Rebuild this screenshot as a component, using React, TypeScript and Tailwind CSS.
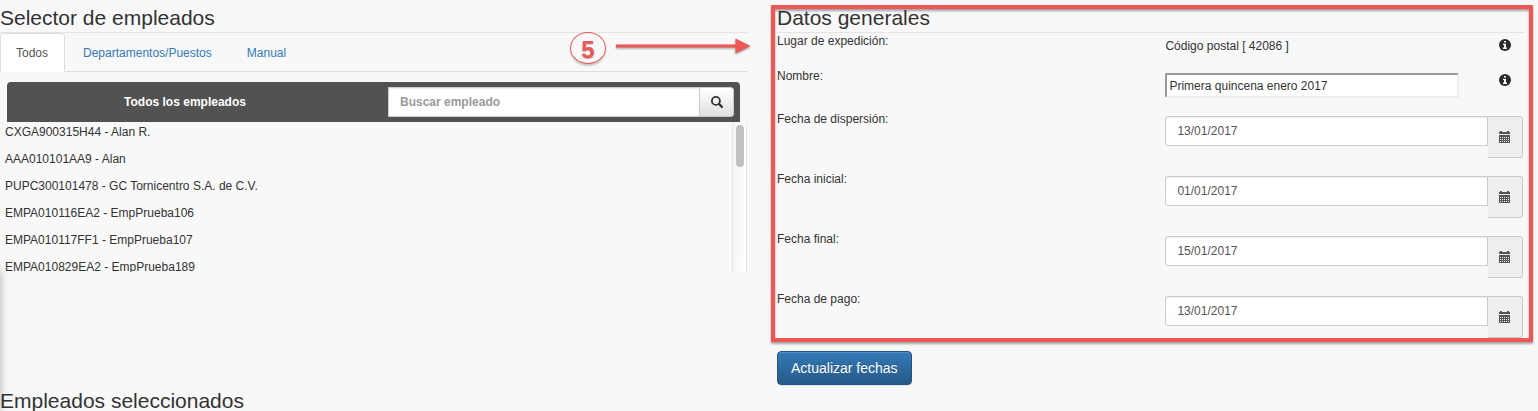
import { useState } from "react";

const tabs = ["Todos", "Departamentos/Puestos", "Manual"];

const employees = [
  "CXGA900315H44 - Alan R.",
  "AAA010101AA9 - Alan",
  "PUPC300101478 - GC Tornicentro S.A. de C.V.",
  "EMPA010116EA2 - EmpPrueba106",
  "EMPA010117FF1 - EmpPrueba107",
  "EMPA010829EA2 - EmpPrueba189",
];

const dates = [
  { id: "dispersion", label: "Fecha de dispersión:", value: "13/01/2017" },
  { id: "inicial", label: "Fecha inicial:", value: "01/01/2017" },
  { id: "final", label: "Fecha final:", value: "15/01/2017" },
  { id: "pago", label: "Fecha de pago:", value: "13/01/2017" },
];

const SearchIcon = () => (
  <svg width="12" height="12" viewBox="0 0 12 12" fill="none" stroke="#333">
    <circle cx="4.9" cy="4.9" r="4" strokeWidth="1.8" />
    <path d="M8 8l2.900 2.900" strokeWidth="2.200" strokeLinecap="round" />
  </svg>
);

const InfoIcon = () => (
  <svg width="12" height="12" viewBox="0 0 12 12">
    <circle cx="6" cy="6" r="6" fill="#2b2b2b" />
    <path
      d="M5 2h2v1.600H5zM4 4.700h3v3.800h1V10H4V8.500h1V5.900H4z"
      fill="#f8f8f8"
    />
  </svg>
);

const CalendarIcon = () => (
  <svg width="11" height="12" viewBox="0 0 11 12" shapeRendering="crispEdges">
    <path d="M1 0h2v1h5V0h2v1h1v2H0V1h1z" fill="#555" />
    <path d="M0 4h11v8H0z" fill="#555" />
    {[6, 8, 10].map((y) =>
      [1, 3, 5, 7, 9].map((x) => (
        <rect key={`${x}-${y}`} x={x} y={y} width="1" height="1" fill="#eee" />
      ))
    )}
  </svg>
);

function Title({ children }: { children: string }) {
  return (
    <h3 className="h-[33px] border-b border-[#e5e5e5] pt-1 text-[21px] leading-7">
      {children}
    </h3>
  );
}

function Row({ id, label, children }: any) {
  return (
    <div className="grid grid-cols-[13fr_12fr]">
      <label htmlFor={id} className="leading-[17px]">
        {label}
      </label>
      <div className="flex items-start pt-[5px] pr-px pb-[13px]">{children}</div>
    </div>
  );
}

export default function App() {
  const [active, setActive] = useState("Todos");

  return (
    <div className="relative min-h-screen overflow-hidden bg-[#f8f8f8] font-['Liberation_Sans',Arial,sans-serif] text-xs text-[#333]">
      <div className="absolute top-[270px] bottom-0 -left-2 w-2 shadow-[0_0_8px_rgba(0,0,0,0.3)]"></div>
      <div className="grid grid-cols-2 gap-[30px] pr-[14px]">
        <section className="relative">
          <Title>Selector de empleados</Title>
          <ul className="flex h-[39px] gap-[2px] border-b border-[#ddd]">
            {tabs.map((x) => (
              <li key={x}>
                <button
                  onClick={() => setActive(x)}
                  className={`h-[39px] cursor-pointer rounded-t border pr-4 pl-[15px] ${
                    active === x
                      ? "border-[#ddd] border-b-white bg-white text-[#555]"
                      : "border-transparent text-[#337ab7]"
                  }`}
                >
                  {x}
                </button>
              </li>
            ))}
          </ul>

          {/* callout */}
          <div className="absolute top-8 -right-1 flex items-start gap-[10px] text-[#ef5656]">
            <span className="flex h-8 w-9 items-center justify-center rounded-[50%] border border-[#ef5656] pt-[3px] text-2xl font-bold shadow-[0_2px_2px_rgba(0,0,0,0.2)] text-shadow-[0_1px_1px_rgba(0,0,0,0.3)]">
              5
            </span>
            <svg
              width="135"
              height="28"
              viewBox="0 0 135 28"
              fill="#ef5656"
              className="drop-shadow-[0_1px_1px_rgba(0,0,0,0.4)]"
            >
              <path d="M0 12.500h119.500V6.500L134.500 14l-15 7.500v-6H0z" />
            </svg>
          </div>

          <div className="mx-[7px] mt-[10px] flex h-10 items-center rounded-t bg-[#525252] pr-[6px]">
            <span className="mr-[25px] flex-1 text-center font-bold text-white">
              Todos los empleados
            </span>
            <div className="flex w-[346px] max-w-[60%]">
              <input
                aria-label="Buscar empleado"
                placeholder="Buscar empleado"
                className="h-[30px] min-w-0 flex-1 border border-[#ccc] bg-white px-[11px] font-bold shadow-[inset_0_1px_1px_rgba(0,0,0,0.075)] placeholder:text-[#999]"
              />
              <button
                aria-label="Buscar"
                className="-ml-px flex h-[30px] w-[35px] items-center justify-center rounded-r-[3px] border border-[#ccc] bg-linear-to-b from-white to-[#e0e0e0]"
              >
                <SearchIcon />
              </button>
            </div>
          </div>

          <div className="flex h-[150px] overflow-hidden">
            <ul className="flex-1 pl-[5px]">
              {employees.map((x) => (
                <li key={x} className="h-[27px] pt-[2px] leading-[17px]">
                  {x}
                </li>
              ))}
            </ul>
            <div className="w-[15px] border-x border-[#e8e8e8] bg-linear-to-r from-[#f5f5f5] to-white px-[3px] pt-[3px]">
              <div className="h-[42px] w-2 rounded-full bg-[#c1c1c1]"></div>
            </div>
          </div>
        </section>

        <section>
          <div className="relative">
            <Title>Datos generales</Title>
            <div className="grid grid-cols-[13fr_12fr]">
              <span className="leading-[17px]">Lugar de expedición:</span>
              <div className="flex items-start justify-between pt-[5px] pr-[13px] pb-[13px]">
                <span className="leading-[17px]">Código postal [ 42086 ]</span>
                <span className="pt-px">
                  <InfoIcon />
                </span>
              </div>
            </div>
            <Row id="nombre" label="Nombre:">
              <input
                id="nombre"
                defaultValue="Primera quincena enero 2017"
                className="h-[25px] w-[82%] rounded-xs border-2 border-t-[#999] border-r-[#eee] border-b-[#eee] border-l-[#999] bg-white px-[2px]"
              />
              <span className="ml-auto pt-px pr-3">
                <InfoIcon />
              </span>
            </Row>
            {dates.map((d) => (
              <Row key={d.id} id={d.id} label={d.label}>
                <input
                  id={d.id}
                  defaultValue={d.value}
                  className="h-[30px] min-w-0 flex-1 rounded-l-[3px] border border-[#ccc] bg-white px-[11px] text-[#555] shadow-[inset_0_1px_1px_rgba(0,0,0,0.075)]"
                />
                <button
                  aria-label="Abrir calendario"
                  className="flex h-[42px] w-[35px] items-center justify-center rounded-r-[3px] border border-l-0 border-[#ccc] bg-[#eee] pr-px pb-px"
                >
                  <CalendarIcon />
                </button>
              </Row>
            ))}
            <div className="pointer-events-none absolute top-[5px] -right-[9px] bottom-[9px] -left-[6px] border-4 border-[#ef5656] drop-shadow-[0_2px_1px_rgba(0,0,0,0.35)]"></div>
          </div>
          <button className="h-[34px] rounded border border-[#245580] bg-linear-to-b from-[#337ab7] to-[#265a88] px-[13px] text-sm text-white shadow-[inset_0_1px_0_rgba(255,255,255,0.15),0_1px_1px_rgba(0,0,0,0.075)] text-shadow-[0_-1px_0_rgba(0,0,0,0.2)]">
            Actualizar fechas
          </button>
        </section>
      </div>
      <h3 className="pt-[6px] text-[21px] leading-5">Empleados seleccionados</h3>
    </div>
  );
}
